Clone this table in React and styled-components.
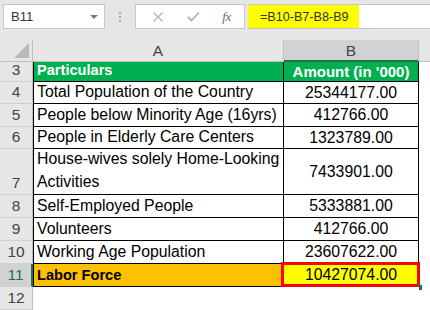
import React from 'react';
import styled, { createGlobalStyle } from 'styled-components';

const Global = createGlobalStyle`
  html, body { margin: 0; padding: 0; background: #fff; }
  body { font-family: "Liberation Sans", Arial, sans-serif; }
  * { box-sizing: border-box; }
`;

const Frame = styled.div`
  width: 430px;
  height: 310px;
  overflow: hidden;
  background: #fff;
  display: flex;
  flex-direction: column;
`;

const Toolbar = styled.div`
  height: 40px;
  flex: none;
  background: #e6e6e6;
  display: flex;
  align-items: flex-start;
  padding: 4px 0 0 3px;
`;

const NameBox = styled.div`
  width: 102px;
  height: 25px;
  background: #fff;
  border: 1px solid #c6c6c6;
  display: flex;
  align-items: center;
  justify-content: space-between;
  padding: 0 6px 0 7px;
  font-size: 13px;
  color: #333;
`;

const Caret = styled.span`
  width: 0;
  height: 0;
  border-left: 4px solid transparent;
  border-right: 4px solid transparent;
  border-top: 4px solid #7a7a7a;
`;

const Grip = styled.div`
  width: 30px;
  height: 25px;
  display: flex;
  flex-direction: column;
  align-items: center;
  justify-content: center;
  gap: 2px;
`;

const Dot = styled.span`
  width: 2px;
  height: 2px;
  background: #a8a8a8;
`;

const ToolBox = styled.div`
  width: 110px;
  height: 25px;
  background: #fff;
  border: 1px solid #c6c6c6;
  display: grid;
  grid-template-columns: 39px 32px 1fr;
  align-items: center;
  justify-items: center;
  padding-left: 2px;
`;

const Fx = styled.span`
  font-family: "Liberation Serif", "Times New Roman", serif;
  font-style: italic;
  font-size: 13px;
  color: #6a6a6a;
  letter-spacing: -0.5px;
`;

const FormulaBar = styled.div`
  flex: 1;
  height: 25px;
  margin-left: 3px;
  background: #fff;
  border-top: 1px solid #c6c6c6;
  border-bottom: 1px solid #c6c6c6;
  display: flex;
`;

const Highlight = styled.div`
  width: 111px;
  height: 100%;
  background: #ffff00;
  display: flex;
  align-items: center;
  padding-left: 12px;
  font-size: 12.6px;
  color: #333;
`;

const Sheet = styled.div`
  display: flex;
  flex-direction: column;
`;

const Row = styled.div`
  display: grid;
  grid-template-columns: 33px 251px 135px 1fr;
  grid-template-rows: ${p => p.$h}px;
  height: ${p => p.$h}px;
  flex: none;
  & > * {
    min-height: 0;
    height: ${p => p.$h}px;
  }
`;

const Corner = styled.div`
  background: #e6e6e6;
  border-right: 1px solid #bfbfbf;
  border-bottom: 1px solid #bfbfbf;
  display: flex;
  align-items: flex-end;
  justify-content: flex-end;
  padding: 0 3px 3px 0;
`;

const ColHead = styled.div`
  background: ${p => (p.$active ? '#d2d2d2' : '#e6e6e6')};
  border-right: 1px solid #bfbfbf;
  border-bottom: ${p => (p.$active ? '2px solid #217346' : '1px solid #bfbfbf')};
  display: flex;
  align-items: center;
  justify-content: center;
  font-size: 15.5px;
  color: #444;
  padding-top: ${p => (p.$active ? '1px' : '0')};
`;

const RowHead = styled.div`
  background: ${p => (p.$active ? '#d2d2d2' : '#e6e6e6')};
  border-right: ${p => (p.$active ? '2px solid #217346' : '1px solid #bfbfbf')};
  border-bottom: 1px solid #d0d0d0;
  display: flex;
  align-items: flex-end;
  justify-content: center;
  font-size: 15.5px;
  line-height: 20px;
  padding-bottom: 1px;
  color: ${p => (p.$active ? '#217346' : '#444')};
`;

const fills = { head: '#00b050', total: '#ffc000', result: '#ffff00', none: '#fff' };

const CellA = styled.div`
  background: ${p => fills[p.$fill || 'none']};
  border-left: ${p => (p.$blank ? '0' : '1px solid #000')};
  border-right: ${p => (p.$blank ? '0' : '1px solid #000')};
  border-bottom: ${p => (p.$blank ? '0' : '1px solid #000')};
  display: flex;
  align-items: flex-end;
  padding: 0 0 1px 3px;
  font-size: ${p => (p.$bold ? '14.6px' : '15.8px')};
  font-weight: ${p => (p.$bold ? 700 : 400)};
  color: ${p => (p.$fill === 'head' ? '#fff' : '#000')};
  line-height: 20px;
  white-space: nowrap;
`;

const CellB = styled.div`
  position: relative;
  background: ${p => fills[p.$fill || 'none']};
  border-right: ${p => (p.$blank ? '0' : '1px solid #000')};
  border-bottom: ${p => (p.$blank ? '0' : '1px solid #000')};
  display: flex;
  align-items: center;
  justify-content: center;
  font-size: ${p => (p.$bold ? '15px' : '15.8px')};
  font-weight: ${p => (p.$bold ? 700 : 400)};
  color: ${p => (p.$fill === 'head' ? '#fff' : '#000')};
  line-height: 20px;
`;

const Rest = styled.div`
  background: ${p => (p.$head ? '#e6e6e6' : '#fff')};
  border-bottom: ${p => (p.$head ? '1px solid #bfbfbf' : '0')};
`;

const Selection = styled.div`
  position: absolute;
  top: -2px;
  left: -3px;
  right: -2px;
  bottom: -1px;
  border: 3px solid #ff0000;
  pointer-events: none;
`;

const Handle = styled.div`
  position: absolute;
  right: -4px;
  bottom: -4px;
  width: 5px;
  height: 5px;
  background: #217346;
`;

const Lines = styled.div`
  display: flex;
  flex-direction: column;
  line-height: 23px;
`;

const rows = [
  { n: 3, h: 20, a: 'Particulars', b: "Amount (in '000)", fill: 'head', bold: true },
  { n: 4, h: 22, a: 'Total Population of the Country', b: '25344177.00' },
  { n: 5, h: 23, a: 'People below Minority Age (16yrs)', b: '412766.00' },
  { n: 6, h: 22, a: 'People in Elderly Care Centers', b: '1323789.00' },
  { n: 7, h: 46, a: ['House-wives solely Home-Looking', 'Activities'], b: '7433901.00' },
  { n: 8, h: 23, a: 'Self-Employed People', b: '5333881.00' },
  { n: 9, h: 23, a: 'Volunteers', b: '412766.00' },
  { n: 10, h: 23, a: 'Working Age Population', b: '23607622.00' },
  { n: 11, h: 23, a: 'Labor Force', b: '10427074.00', fill: 'total', bold: true, selected: true },
];

export default function App() {
  return (
    <Frame>
      <Global />
      <Toolbar>
        <NameBox>
          <span>B11</span>
          <Caret />
        </NameBox>
        <Grip>
          <Dot />
          <Dot />
          <Dot />
        </Grip>
        <ToolBox>
          <svg width="12" height="12" viewBox="0 0 12 12">
            <path d="M1.5 1.5 L10.5 10.5 M10.5 1.5 L1.5 10.5" stroke="#b4b4b4" strokeWidth="1.4" fill="none" />
          </svg>
          <svg width="13" height="11" viewBox="0 0 13 11">
            <path d="M1 6 L4.5 9.5 L12 1.5" stroke="#b4b4b4" strokeWidth="1.8" fill="none" />
          </svg>
          <Fx>fx</Fx>
        </ToolBox>
        <FormulaBar>
          <Highlight>=B10-B7-B8-B9</Highlight>
        </FormulaBar>
      </Toolbar>
      <Sheet>
        <Row $h={22}>
          <Corner>
            <svg width="15" height="15" viewBox="0 0 15 15">
              <path d="M15 0 L15 15 L0 15 Z" fill="#b9b9b9" />
            </svg>
          </Corner>
          <ColHead>A</ColHead>
          <ColHead $active>B</ColHead>
          <Rest $head />
        </Row>
        {rows.map(r => (
          <Row key={r.n} $h={r.h}>
            <RowHead $active={r.selected}>{r.n}</RowHead>
            <CellA $fill={r.fill} $bold={r.bold}>
              {Array.isArray(r.a) ? (
                <Lines>
                  {r.a.map(l => (
                    <span key={l}>{l}</span>
                  ))}
                </Lines>
              ) : (
                r.a
              )}
            </CellA>
            <CellB $fill={r.selected ? 'result' : r.fill} $bold={r.bold && !r.selected}>
              {r.b}
              {r.selected && (
                <>
                  <Selection />
                  <Handle />
                </>
              )}
            </CellB>
            <Rest />
          </Row>
        ))}
        <Row $h={23}>
          <RowHead>12</RowHead>
          <CellA $blank />
          <CellB $blank />
          <Rest />
        </Row>
      </Sheet>
    </Frame>
  );
}
